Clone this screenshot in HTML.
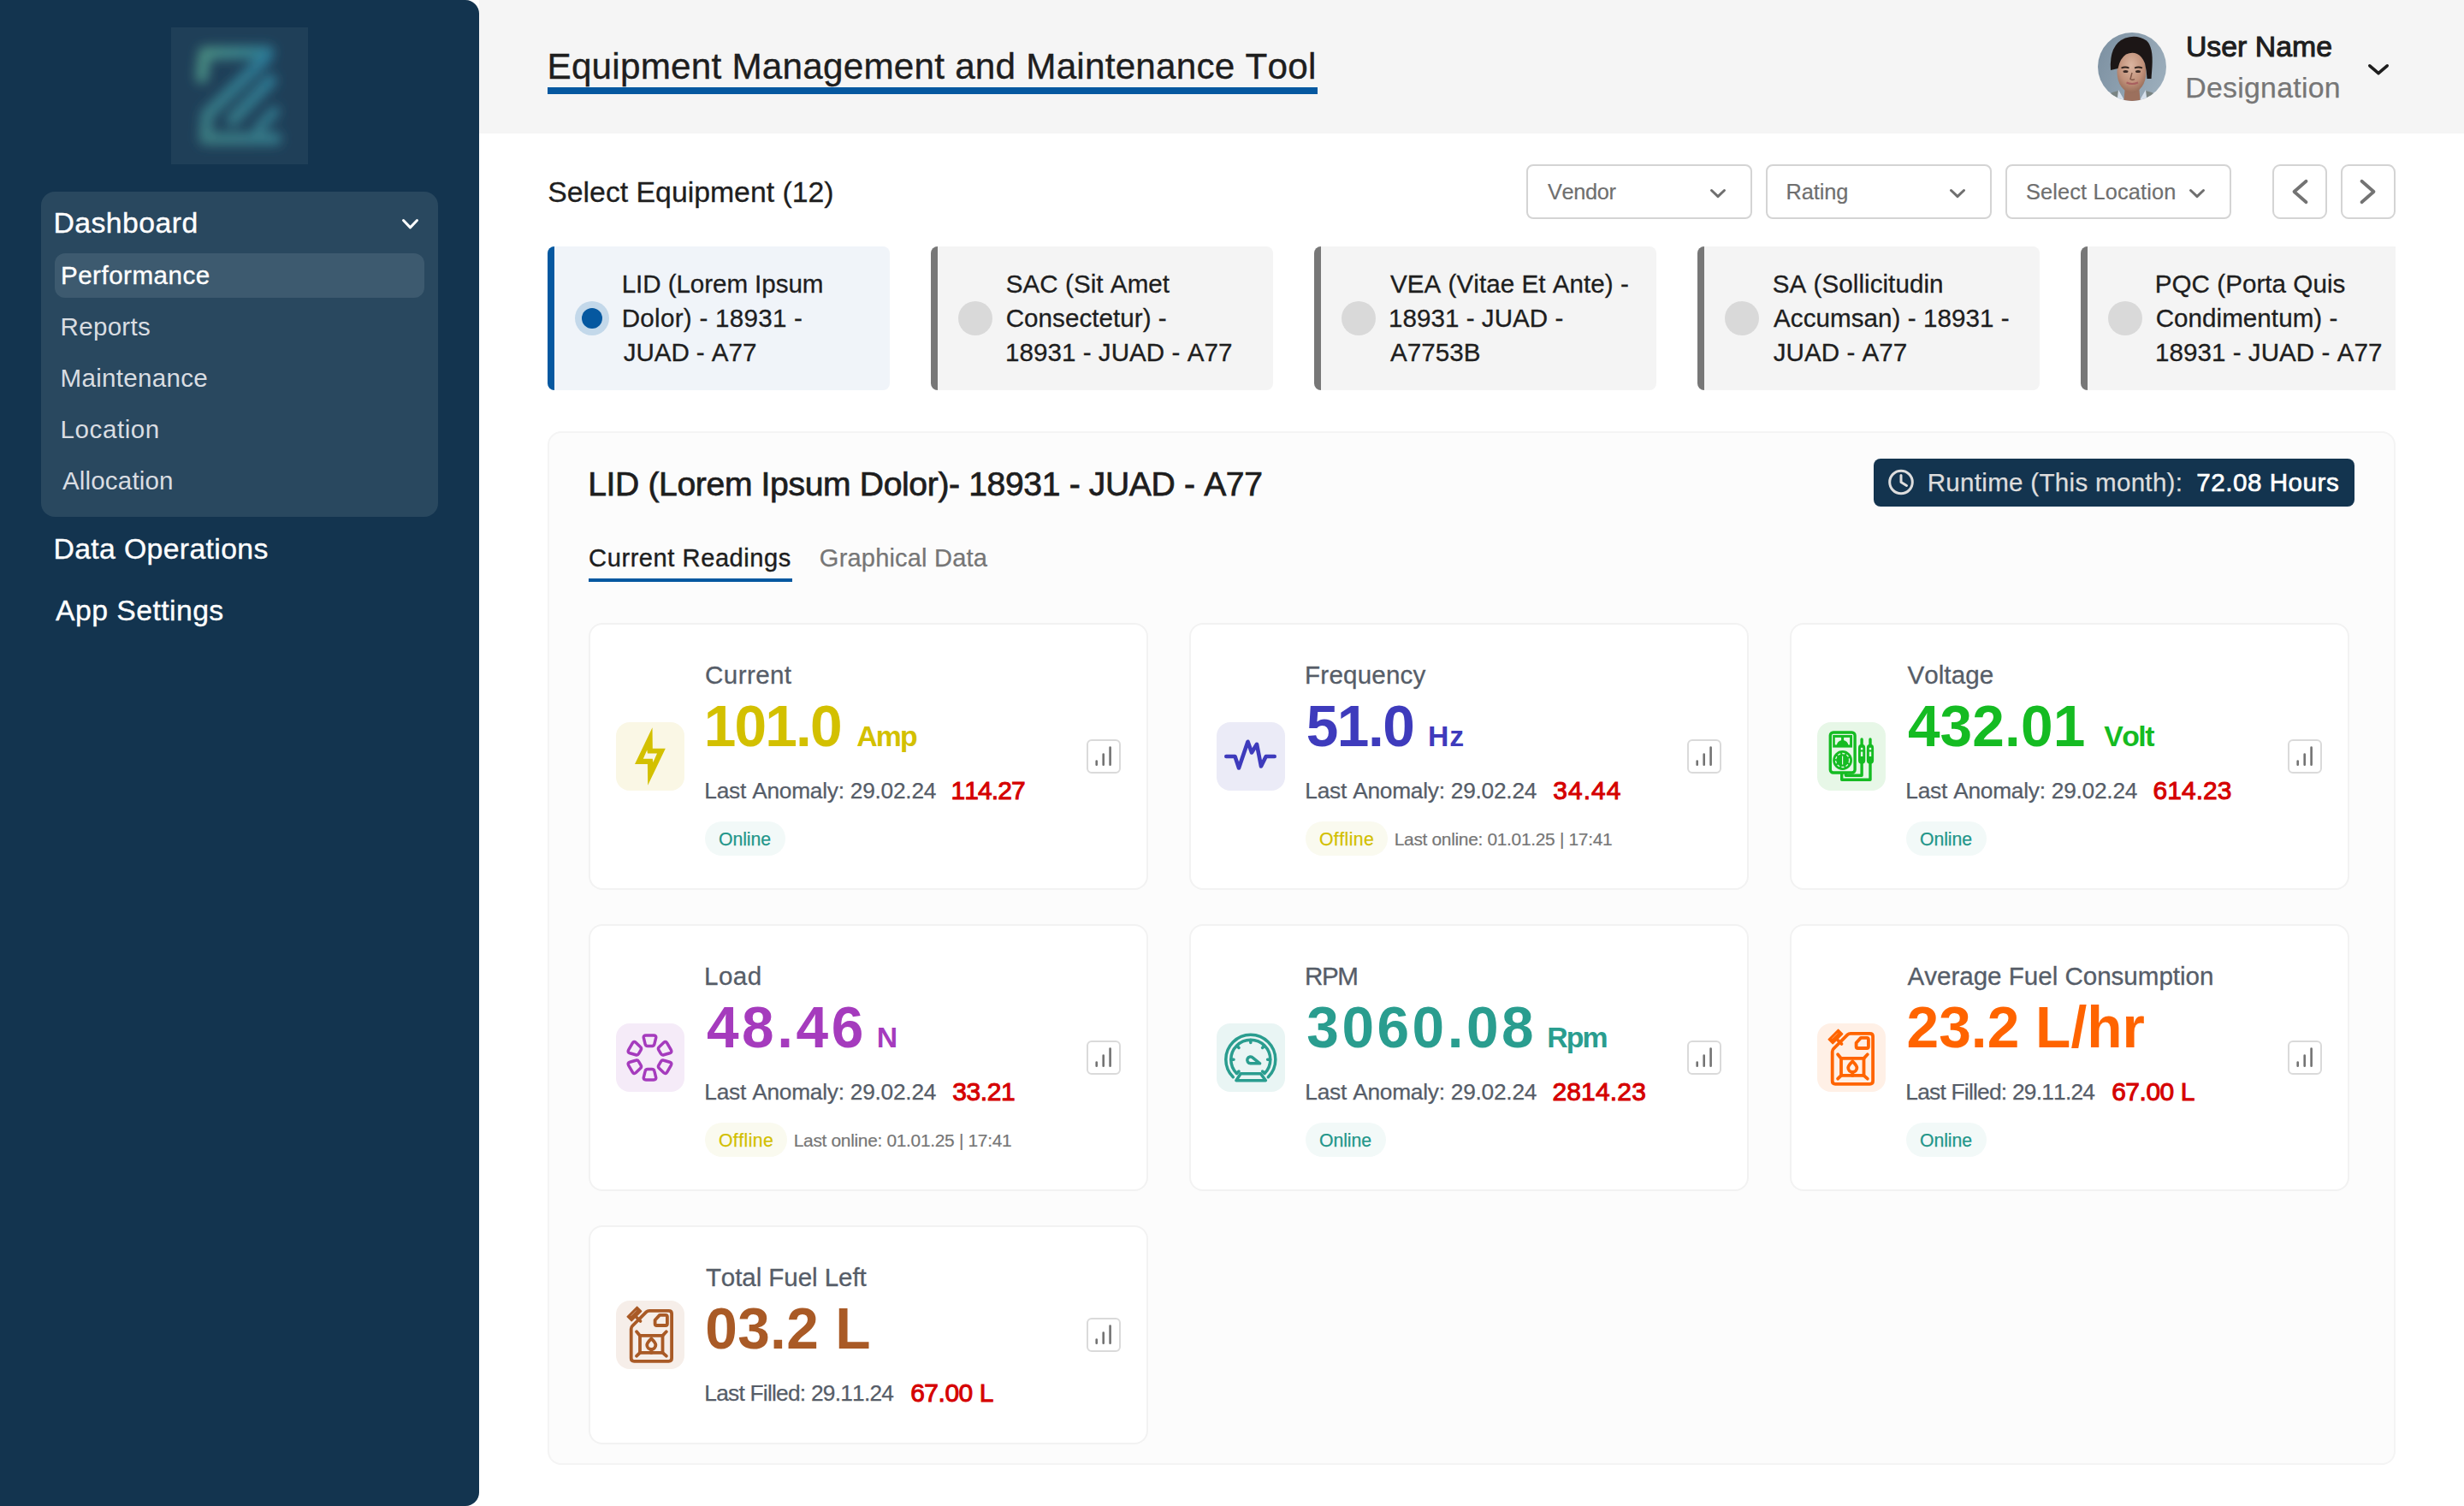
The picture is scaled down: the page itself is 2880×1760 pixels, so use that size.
<!DOCTYPE html>
<html><head><meta charset="utf-8"><title>Equipment Management and Maintenance Tool</title>
<style>
html,body{margin:0;padding:0}
body{width:2880px;height:1760px;position:relative;overflow:hidden;background:#ffffff;font-family:"Liberation Sans",sans-serif}
.a{position:absolute;display:block}
.t{position:absolute;white-space:nowrap;line-height:1;font-kerning:none}
.mk{display:inline-block;width:0;height:0;vertical-align:baseline}
</style></head><body>
<div class="a" style="left:0px;top:0px;width:560px;height:1760px;background:#13344f;border-radius:0 16px 16px 0"></div>
<div class="a" style="left:200px;top:32px;width:160px;height:160px;background:#1f3f58;overflow:hidden"></div>
<svg class="a" style="left:200px;top:32px;width:160px;height:160px" viewBox="0 0 160 160"><defs><filter id="bl" x="-50%" y="-50%" width="200%" height="200%"><feGaussianBlur stdDeviation="6.5"/></filter><linearGradient id="lg" gradientUnits="userSpaceOnUse" x1="35" y1="30" x2="120" y2="60"><stop offset="0" stop-color="#4a8c80"/><stop offset="1" stop-color="#2a7b99"/></linearGradient><linearGradient id="lg2" gradientUnits="userSpaceOnUse" x1="40" y1="130" x2="120" y2="40"><stop offset="0" stop-color="#3b7a80"/><stop offset="1" stop-color="#2b7896"/></linearGradient></defs><g filter="url(#bl)" fill="none" stroke-width="15" stroke-linecap="round" stroke-linejoin="round"><path stroke="url(#lg)" d="M36 58 L39.5 30 L113 29"/><path stroke="url(#lg2)" d="M110 36 L42 102 L40 130 L122 130"/><path stroke="url(#lg2)" d="M116 62 L72 108"/><path stroke="url(#lg2)" d="M121 98 L102 118" stroke-width="12"/></g></svg>
<div class="a" style="left:48px;top:224px;width:464px;height:380px;background:#29485f;border-radius:16px"></div>
<div class="a" style="left:64px;top:296px;width:432px;height:52px;background:#3d5a6f;border-radius:12px"></div>
<svg class="a" style="left:466px;top:252.3px;width:27px;height:19.4px" viewBox="0 0 27 19.4"><path d="M5.5 5.5 L13.5 13.9 L21.5 5.5" fill="none" stroke="#ffffff" stroke-width="3" stroke-linecap="round" stroke-linejoin="round"/></svg>
<div class="a" style="left:560px;top:0px;width:2320px;height:156px;background:#f5f5f5"></div>
<div class="a" style="left:640px;top:102px;width:900px;height:8px;background:#0558a0"></div>
<svg class="a" style="left:2452px;top:38px;width:80px;height:80px" viewBox="0 0 80 80"><defs><clipPath id="avc"><circle cx="40" cy="40" r="40"/></clipPath><linearGradient id="avbg" x1="0" y1="0.2" x2="1" y2="0.6"><stop offset="0" stop-color="#7d91a2"/><stop offset="1" stop-color="#9badbb"/></linearGradient><radialGradient id="avsk" cx="0.48" cy="0.35" r="0.7"><stop offset="0" stop-color="#dbb5a0"/><stop offset="0.6" stop-color="#c09079"/><stop offset="1" stop-color="#8f6552"/></radialGradient></defs><filter id="avbl"><feGaussianBlur stdDeviation="0.7"/></filter><g clip-path="url(#avc)"><rect width="80" height="80" fill="url(#avbg)"/><g filter="url(#avbl)"><path d="M2 84 Q8 71 24 68 L30 84 Z M78 84 Q72 71 56 68 L50 84 Z" fill="#7a8483"/><path d="M24 67 L34 84 L22 84 Z M56 67 L46 84 L58 84 Z" fill="#d6e0ec"/><path d="M32 62 Q40 72 48 62 L50 84 H30 Z" fill="#9c705d"/><ellipse cx="39.5" cy="46" rx="17" ry="24.5" fill="url(#avsk)"/><path d="M15 44 Q13 14 32 6.5 Q46 2 57 9.5 Q65 17 63.5 40 L62.5 54 L57.5 54 Q57 44 55 36 Q52 28 46 25 Q40 22.5 33 25.5 Q26 30 23.5 42 Z" fill="#1f1917"/><path d="M27.5 41.5 Q32 39.5 36.5 41.5 M43 41.5 Q47.5 39.5 52 41.5" stroke="#2e221e" stroke-width="1.8" fill="none"/><ellipse cx="32.5" cy="45.5" rx="3" ry="1.5" fill="#3b2c26"/><ellipse cx="47" cy="45.5" rx="3" ry="1.5" fill="#3b2c26"/><path d="M40 47 L38 54.5 Q40.5 56 43 54.5" stroke="#7e5646" stroke-width="1.4" fill="none"/><path d="M33.5 58.5 Q40 61.5 47 58.5" stroke="#a85f5f" stroke-width="2" fill="none"/></g></g></svg>
<svg class="a" style="left:2764px;top:70.5px;width:32px;height:20.5px" viewBox="0 0 32 20.5"><path d="M5.8 5.8 L16 14.7 L26.2 5.8" fill="none" stroke="#1e1e1e" stroke-width="3.6" stroke-linecap="round" stroke-linejoin="round"/></svg>
<div class="a" style="left:1784px;top:192px;width:264px;height:64px;box-sizing:border-box;border:2px solid #d4d4d4;border-radius:8px;background:#fff"></div>
<svg class="a" style="left:1995px;top:217px;width:26px;height:18.2px" viewBox="0 0 26 18.2"><path d="M5.5 5.5 L13 12.7 L20.5 5.5" fill="none" stroke="#6f6f6f" stroke-width="3" stroke-linecap="round" stroke-linejoin="round"/></svg>
<div class="a" style="left:2064px;top:192px;width:264px;height:64px;box-sizing:border-box;border:2px solid #d4d4d4;border-radius:8px;background:#fff"></div>
<svg class="a" style="left:2275px;top:217px;width:26px;height:18.2px" viewBox="0 0 26 18.2"><path d="M5.5 5.5 L13 12.7 L20.5 5.5" fill="none" stroke="#6f6f6f" stroke-width="3" stroke-linecap="round" stroke-linejoin="round"/></svg>
<div class="a" style="left:2344px;top:192px;width:264px;height:64px;box-sizing:border-box;border:2px solid #d4d4d4;border-radius:8px;background:#fff"></div>
<svg class="a" style="left:2555px;top:217px;width:26px;height:18.2px" viewBox="0 0 26 18.2"><path d="M5.5 5.5 L13 12.7 L20.5 5.5" fill="none" stroke="#6f6f6f" stroke-width="3" stroke-linecap="round" stroke-linejoin="round"/></svg>
<div class="a" style="left:2656px;top:192px;width:64px;height:64px;box-sizing:border-box;border:2px solid #d4d4d4;border-radius:9px;background:#fff"></div>
<div class="a" style="left:2736px;top:192px;width:64px;height:64px;box-sizing:border-box;border:2px solid #d4d4d4;border-radius:9px;background:#fff"></div>
<svg class="a" style="left:2672px;top:200px;width:32px;height:48px" viewBox="0 0 32 48"><path d="M23.5 11.8 L9.5 24 L23.5 36.2" fill="none" stroke="#737373" stroke-width="3.8" stroke-linecap="round" stroke-linejoin="round"/></svg>
<svg class="a" style="left:2752px;top:200px;width:32px;height:48px" viewBox="0 0 32 48"><path d="M8.5 11.8 L22.5 24 L8.5 36.2" fill="none" stroke="#737373" stroke-width="3.8" stroke-linecap="round" stroke-linejoin="round"/></svg>
<div class="a" style="left:640px;top:288px;width:2160px;height:168px;overflow:hidden"><div class="a" style="left:0px;top:0;width:400px;height:168px;background:#f0f4f9;border-radius:8px;overflow:hidden"><div class="a" style="left:0;top:0;width:8px;height:168px;background:#0558a0"></div></div><div class="a" style="left:32px;top:64px;width:40px;height:40px;border-radius:50%;background:#c3d8ea"></div><div class="a" style="left:40px;top:72px;width:24px;height:24px;border-radius:50%;background:#0558a0"></div><div class="a" style="left:448px;top:0;width:400px;height:168px;background:#f4f4f4;border-radius:8px;overflow:hidden"><div class="a" style="left:0;top:0;width:8px;height:168px;background:#777777"></div></div><div class="a" style="left:480px;top:64px;width:40px;height:40px;border-radius:50%;background:#d9d9d9"></div><div class="a" style="left:896px;top:0;width:400px;height:168px;background:#f4f4f4;border-radius:8px;overflow:hidden"><div class="a" style="left:0;top:0;width:8px;height:168px;background:#777777"></div></div><div class="a" style="left:928px;top:64px;width:40px;height:40px;border-radius:50%;background:#d9d9d9"></div><div class="a" style="left:1344px;top:0;width:400px;height:168px;background:#f4f4f4;border-radius:8px;overflow:hidden"><div class="a" style="left:0;top:0;width:8px;height:168px;background:#777777"></div></div><div class="a" style="left:1376px;top:64px;width:40px;height:40px;border-radius:50%;background:#d9d9d9"></div><div class="a" style="left:1792px;top:0;width:400px;height:168px;background:#f4f4f4;border-radius:8px;overflow:hidden"><div class="a" style="left:0;top:0;width:8px;height:168px;background:#777777"></div></div><div class="a" style="left:1824px;top:64px;width:40px;height:40px;border-radius:50%;background:#d9d9d9"></div></div>
<div class="a" style="left:640px;top:504px;width:2160px;height:1208px;box-sizing:border-box;border:2px solid #f4f4f4;border-radius:16px;background:#fcfcfc"></div>
<div class="a" style="left:2190px;top:536px;width:562px;height:56px;background:#13344f;border-radius:8px"></div>
<svg class="a" style="left:2204px;top:546px;width:36px;height:36px" viewBox="0 0 36 36"><circle cx="18" cy="17.5" r="13.3" fill="none" stroke="#dddddd" stroke-width="3"/><path d="M18 9.5 V17.5 L24.5 21.5" fill="none" stroke="#dddddd" stroke-width="3" stroke-linecap="round" stroke-linejoin="round"/></svg>
<div class="a" style="left:688px;top:676px;width:238px;height:4px;background:#0558a0"></div>
<div class="a" style="left:688px;top:728px;width:654px;height:312px;box-sizing:border-box;border:2px solid #f2f2f2;border-radius:16px;background:#fff"></div>
<div class="a" style="left:720px;top:844px;width:80px;height:80px;background:#faf7e5;border-radius:16px"></div>
<svg class="a" style="left:720px;top:844px;width:80px;height:80px" viewBox="0 0 80 80"><path fill="#d3c000" fill-rule="evenodd" d="M42.5 6.2 L42.8 30.8 L57.8 30.8 L37.2 73.7 L36.9 48.9 L22 48.9 Z M36.3 32.5 L36.9 36.6 L48 36.6 L43.3 47.1 L42.8 42.8 L31.8 42.8 Z"/></svg>
<div class="a" style="left:1270px;top:864px;width:40px;height:40px;box-sizing:border-box;border:2px solid #dadada;border-radius:6px;background:#fff"></div>
<svg class="a" style="left:1270px;top:864px;width:40px;height:40px" viewBox="0 0 40 40"><g stroke="#737373" stroke-width="2.6" stroke-linecap="round"><path d="M11.7 25.5 V29.8 M19.7 17.5 V29.8 M27.6 9.5 V29.8"/></g></svg>
<div class="a" style="left:824px;top:960px;width:94px;height:40px;background:#f2f9f8;border-radius:20px"></div>
<div class="a" style="left:1390px;top:728px;width:654px;height:312px;box-sizing:border-box;border:2px solid #f2f2f2;border-radius:16px;background:#fff"></div>
<div class="a" style="left:1422px;top:844px;width:80px;height:80px;background:#ebebf7;border-radius:16px"></div>
<svg class="a" style="left:1422px;top:844px;width:80px;height:80px" viewBox="0 0 80 80"><path fill="none" stroke="#3e3bbc" stroke-width="4.6" stroke-linecap="round" stroke-linejoin="round" d="M11.3 40 H21.5 L26 53.5 L36.5 22.8 L41 35.5 L47 25.8 L52 51.5 L57.7 40 H67.7"/></svg>
<div class="a" style="left:1972px;top:864px;width:40px;height:40px;box-sizing:border-box;border:2px solid #dadada;border-radius:6px;background:#fff"></div>
<svg class="a" style="left:1972px;top:864px;width:40px;height:40px" viewBox="0 0 40 40"><g stroke="#737373" stroke-width="2.6" stroke-linecap="round"><path d="M11.7 25.5 V29.8 M19.7 17.5 V29.8 M27.6 9.5 V29.8"/></g></svg>
<div class="a" style="left:1526px;top:960px;width:96px;height:40px;background:#fafaef;border-radius:20px"></div>
<div class="a" style="left:2092px;top:728px;width:654px;height:312px;box-sizing:border-box;border:2px solid #f2f2f2;border-radius:16px;background:#fff"></div>
<div class="a" style="left:2124px;top:844px;width:80px;height:80px;background:#e7f7e7;border-radius:16px"></div>
<svg class="a" style="left:2124px;top:844px;width:80px;height:80px" viewBox="0 0 80 80"><g fill="none" stroke="#15bb22" stroke-width="3.4" stroke-linecap="round" stroke-linejoin="round"><rect x="15.3" y="12" width="28.8" height="47" rx="3.5"/><path d="M52.1 45 V62.3 H33.4 V60"/><path d="M62 45 V67.3 H28.7 V60"/><path d="M52.1 20 V26 M62 20 V26"/></g><g fill="#15bb22"><rect x="18.2" y="15" width="22.8" height="14.6"/><circle cx="29.6" cy="44.5" r="11.4"/><rect x="48" y="25.8" width="8.2" height="23" rx="4.1"/><rect x="57.9" y="25.8" width="8.2" height="23" rx="4.1"/></g><g fill="#e7f7e7"><rect x="20.8" y="17.9" width="7.3" height="8.5"/><rect x="31.1" y="17.9" width="7" height="8.5"/><rect x="50.9" y="29.8" width="2.4" height="2.6"/><rect x="50.9" y="34.5" width="2.4" height="5.5"/><rect x="60.8" y="29.8" width="2.4" height="2.6"/><rect x="60.8" y="34.5" width="2.4" height="5.5"/></g><path fill="#15bb22" d="M22.6 28 A7 7 0 0 1 36.6 28 Z"/><rect x="28.6" y="17" width="2" height="8" fill="#15bb22"/><circle cx="29.6" cy="44.5" r="8" fill="none" stroke="#e7f7e7" stroke-width="1.3" stroke-dasharray="3.2 2.1"/><rect x="29" y="39.5" width="1.2" height="10" fill="#e7f7e7"/></svg>
<div class="a" style="left:2674px;top:864px;width:40px;height:40px;box-sizing:border-box;border:2px solid #dadada;border-radius:6px;background:#fff"></div>
<svg class="a" style="left:2674px;top:864px;width:40px;height:40px" viewBox="0 0 40 40"><g stroke="#737373" stroke-width="2.6" stroke-linecap="round"><path d="M11.7 25.5 V29.8 M19.7 17.5 V29.8 M27.6 9.5 V29.8"/></g></svg>
<div class="a" style="left:2228px;top:960px;width:94px;height:40px;background:#f2f9f8;border-radius:20px"></div>
<div class="a" style="left:688px;top:1080px;width:654px;height:312px;box-sizing:border-box;border:2px solid #f2f2f2;border-radius:16px;background:#fff"></div>
<div class="a" style="left:720px;top:1196px;width:80px;height:80px;background:#f5ebf8;border-radius:16px"></div>
<svg class="a" style="left:720px;top:1196px;width:80px;height:80px" viewBox="0 0 80 80"><g fill="none" stroke="#a53bbd" stroke-width="3.5" stroke-linejoin="round"><path transform="rotate(0 39.5 40)" d="M35 14 H44 Q47.3 14 46.6 17.2 L44.9 24.2 Q44.4 26.5 42 26.5 H37 Q34.6 26.5 34.1 24.2 L32.4 17.2 Q31.7 14 35 14 Z"/><path transform="rotate(60 39.5 40)" d="M35 14 H44 Q47.3 14 46.6 17.2 L44.9 24.2 Q44.4 26.5 42 26.5 H37 Q34.6 26.5 34.1 24.2 L32.4 17.2 Q31.7 14 35 14 Z"/><path transform="rotate(120 39.5 40)" d="M35 14 H44 Q47.3 14 46.6 17.2 L44.9 24.2 Q44.4 26.5 42 26.5 H37 Q34.6 26.5 34.1 24.2 L32.4 17.2 Q31.7 14 35 14 Z"/><path transform="rotate(180 39.5 40)" d="M35 14 H44 Q47.3 14 46.6 17.2 L44.9 24.2 Q44.4 26.5 42 26.5 H37 Q34.6 26.5 34.1 24.2 L32.4 17.2 Q31.7 14 35 14 Z"/><path transform="rotate(240 39.5 40)" d="M35 14 H44 Q47.3 14 46.6 17.2 L44.9 24.2 Q44.4 26.5 42 26.5 H37 Q34.6 26.5 34.1 24.2 L32.4 17.2 Q31.7 14 35 14 Z"/><path transform="rotate(300 39.5 40)" d="M35 14 H44 Q47.3 14 46.6 17.2 L44.9 24.2 Q44.4 26.5 42 26.5 H37 Q34.6 26.5 34.1 24.2 L32.4 17.2 Q31.7 14 35 14 Z"/></g></svg>
<div class="a" style="left:1270px;top:1216px;width:40px;height:40px;box-sizing:border-box;border:2px solid #dadada;border-radius:6px;background:#fff"></div>
<svg class="a" style="left:1270px;top:1216px;width:40px;height:40px" viewBox="0 0 40 40"><g stroke="#737373" stroke-width="2.6" stroke-linecap="round"><path d="M11.7 25.5 V29.8 M19.7 17.5 V29.8 M27.6 9.5 V29.8"/></g></svg>
<div class="a" style="left:824px;top:1312px;width:96px;height:40px;background:#fafaef;border-radius:20px"></div>
<div class="a" style="left:1390px;top:1080px;width:654px;height:312px;box-sizing:border-box;border:2px solid #f2f2f2;border-radius:16px;background:#fff"></div>
<div class="a" style="left:1422px;top:1196px;width:80px;height:80px;background:#e9f5f4;border-radius:16px"></div>
<svg class="a" style="left:1422px;top:1196px;width:80px;height:80px" viewBox="0 0 80 80"><g fill="none" stroke="#2a9d8f" stroke-width="3.5" stroke-linecap="round" stroke-linejoin="round"><path d="M19.3 62.7 A29 29 0 1 1 60.3 62.7"/><path d="M23.5 58.5 A23 23 0 1 1 56.1 58.5"/><path d="M39.8 19.5 V22.5 M17 42.2 H20 M62.6 42.2 H59.6 M23.9 26.3 L26 28.4 M55.7 26.3 L53.6 28.4 M23.9 58.1 L26 56 M55.7 58.1 L53.6 56"/><path d="M50.6 46.8 L39.7 46.8 A3.9 3.9 0 1 1 42.6 40.3 Z"/><path d="M28.1 58.8 H51.5 L57.4 66.7 H22.9 Z"/></g></svg>
<div class="a" style="left:1972px;top:1216px;width:40px;height:40px;box-sizing:border-box;border:2px solid #dadada;border-radius:6px;background:#fff"></div>
<svg class="a" style="left:1972px;top:1216px;width:40px;height:40px" viewBox="0 0 40 40"><g stroke="#737373" stroke-width="2.6" stroke-linecap="round"><path d="M11.7 25.5 V29.8 M19.7 17.5 V29.8 M27.6 9.5 V29.8"/></g></svg>
<div class="a" style="left:1526px;top:1312px;width:94px;height:40px;background:#f2f9f8;border-radius:20px"></div>
<div class="a" style="left:2092px;top:1080px;width:654px;height:312px;box-sizing:border-box;border:2px solid #f2f2f2;border-radius:16px;background:#fff"></div>
<div class="a" style="left:2124px;top:1196px;width:80px;height:80px;background:#fff0e6;border-radius:16px"></div>
<svg class="a" style="left:2124px;top:1196px;width:80px;height:80px" viewBox="0 0 80 80"><g fill="none" stroke="#ff6400" stroke-width="3.8" stroke-linecap="round" stroke-linejoin="round"><path d="M17.7 33 Q17.7 31 19.2 29.5 L35.5 13.2 Q36.9 11.8 38.9 11.8 H61.6 Q65.1 11.8 65.1 15.3 V67.3 Q65.1 70.8 61.6 70.8 H21.2 Q17.7 70.8 17.7 67.3 Z"/><path d="M45.6 22.8 L51 16.9 H58 Q59.9 16.9 59.9 18.8 V27 Q59.9 29 58 29 H47.6 Q45.6 29 45.6 27 Z"/><rect x="28" y="40.9" width="26.5" height="20"/><path d="M24.1 36.3 L28 40.9 M58.8 36.3 L54.5 40.9 M24.1 64.7 L28 60.9 M58.8 64.7 L54.5 60.9"/><path d="M41.3 44.3 C38.5 47 36.2 49.5 36.2 51.8 A5.1 5.1 0 0 0 46.4 51.8 C46.4 49.5 44.1 47 41.3 44.3 Z"/><path d="M41.3 57 V60.9 M24 19.5 L28.5 24"/></g><path fill="#ff6400" d="M13.2 18.8 L24.6 7.4 L29.6 12.4 L18.2 23.8 Z" stroke="#ff6400" stroke-width="1.5" stroke-linejoin="round"/><path d="M17.5 17.8 L23.8 11.5" stroke="#fff0e6" stroke-width="0.7" opacity="0.6"/></svg>
<div class="a" style="left:2674px;top:1216px;width:40px;height:40px;box-sizing:border-box;border:2px solid #dadada;border-radius:6px;background:#fff"></div>
<svg class="a" style="left:2674px;top:1216px;width:40px;height:40px" viewBox="0 0 40 40"><g stroke="#737373" stroke-width="2.6" stroke-linecap="round"><path d="M11.7 25.5 V29.8 M19.7 17.5 V29.8 M27.6 9.5 V29.8"/></g></svg>
<div class="a" style="left:2228px;top:1312px;width:94px;height:40px;background:#f2f9f8;border-radius:20px"></div>
<div class="a" style="left:688px;top:1432px;width:654px;height:256px;box-sizing:border-box;border:2px solid #f2f2f2;border-radius:16px;background:#fff"></div>
<div class="a" style="left:720px;top:1520px;width:80px;height:80px;background:#f6eee9;border-radius:16px"></div>
<svg class="a" style="left:720px;top:1520px;width:80px;height:80px" viewBox="0 0 80 80"><g fill="none" stroke="#a95a26" stroke-width="3.8" stroke-linecap="round" stroke-linejoin="round"><path d="M17.7 33 Q17.7 31 19.2 29.5 L35.5 13.2 Q36.9 11.8 38.9 11.8 H61.6 Q65.1 11.8 65.1 15.3 V67.3 Q65.1 70.8 61.6 70.8 H21.2 Q17.7 70.8 17.7 67.3 Z"/><path d="M45.6 22.8 L51 16.9 H58 Q59.9 16.9 59.9 18.8 V27 Q59.9 29 58 29 H47.6 Q45.6 29 45.6 27 Z"/><rect x="28" y="40.9" width="26.5" height="20"/><path d="M24.1 36.3 L28 40.9 M58.8 36.3 L54.5 40.9 M24.1 64.7 L28 60.9 M58.8 64.7 L54.5 60.9"/><path d="M41.3 44.3 C38.5 47 36.2 49.5 36.2 51.8 A5.1 5.1 0 0 0 46.4 51.8 C46.4 49.5 44.1 47 41.3 44.3 Z"/><path d="M41.3 57 V60.9 M24 19.5 L28.5 24"/></g><path fill="#a95a26" d="M13.2 18.8 L24.6 7.4 L29.6 12.4 L18.2 23.8 Z" stroke="#a95a26" stroke-width="1.5" stroke-linejoin="round"/><path d="M17.5 17.8 L23.8 11.5" stroke="#f6eee9" stroke-width="0.7" opacity="0.6"/></svg>
<div class="a" style="left:1270px;top:1540px;width:40px;height:40px;box-sizing:border-box;border:2px solid #dadada;border-radius:6px;background:#fff"></div>
<svg class="a" style="left:1270px;top:1540px;width:40px;height:40px" viewBox="0 0 40 40"><g stroke="#737373" stroke-width="2.6" stroke-linecap="round"><path d="M11.7 25.5 V29.8 M19.7 17.5 V29.8 M27.6 9.5 V29.8"/></g></svg>
<span class="t" id="nav_dash" style="left:62.40px;top:244.00px;font-size:33.81px;color:#ffffff;letter-spacing:0.432px;-webkit-text-stroke:0.35px #ffffff">Dashboard</span>
<span class="t" id="nav_perf" style="left:70.95px;top:307.00px;font-size:29.59px;color:#ffffff;letter-spacing:0.486px;-webkit-text-stroke:0.35px #ffffff">Performance</span>
<span class="t" id="nav_rep" style="left:70.57px;top:367.00px;font-size:29.59px;color:#d9dde2;letter-spacing:0.270px">Reports</span>
<span class="t" id="nav_mai" style="left:70.57px;top:427.00px;font-size:29.59px;color:#d9dde2;letter-spacing:0.277px">Maintenance</span>
<span class="t" id="nav_loc" style="left:70.57px;top:487.00px;font-size:29.59px;color:#d9dde2;letter-spacing:0.546px">Location</span>
<span class="t" id="nav_all" style="left:72.94px;top:547.00px;font-size:29.59px;color:#d9dde2;letter-spacing:0.148px">Allocation</span>
<span class="t" id="nav_dat" style="left:62.40px;top:624.50px;font-size:33.81px;color:#ffffff;letter-spacing:0.345px;-webkit-text-stroke:0.35px #ffffff">Data Operations</span>
<span class="t" id="nav_app" style="left:65.11px;top:697.00px;font-size:33.81px;color:#ffffff;letter-spacing:0.407px;-webkit-text-stroke:0.35px #ffffff">App Settings</span>
<span class="t" id="h_title" style="left:639.51px;top:57.00px;font-size:42.27px;color:#1e1e1e;letter-spacing:0.209px;-webkit-text-stroke:0.35px #1e1e1e">Equipment Management and Maintenance Tool</span>
<span class="t" id="h_user" style="left:2554.89px;top:38.00px;font-size:33.81px;color:#1e1e1e;letter-spacing:0.026px;-webkit-text-stroke:1px #1e1e1e">User Name</span>
<span class="t" id="h_desig" style="left:2554.35px;top:86.00px;font-size:33.81px;color:#767676;letter-spacing:0.272px;-webkit-text-stroke:0.25px #767676">Designation</span>
<span class="t" id="sel_eq" style="left:640.31px;top:208.00px;font-size:33.81px;color:#1e1e1e;letter-spacing:-0.008px;-webkit-text-stroke:0.3px #1e1e1e">Select Equipment (12)</span>
<span class="t" id="f_vendor" style="left:1808.99px;top:212.00px;font-size:25.36px;color:#6f6f6f;letter-spacing:-0.350px;-webkit-text-stroke:0.2px #6f6f6f">Vendor</span>
<span class="t" id="f_rating" style="left:2087.52px;top:212.00px;font-size:25.36px;color:#6f6f6f;letter-spacing:-0.080px;-webkit-text-stroke:0.2px #6f6f6f">Rating</span>
<span class="t" id="f_loc" style="left:2367.95px;top:212.00px;font-size:25.36px;color:#6f6f6f;letter-spacing:0.142px;-webkit-text-stroke:0.2px #6f6f6f">Select Location</span>
<span class="t" id="eq0_0" style="left:726.72px;top:317.20px;font-size:29.59px;color:#1e1e1e;letter-spacing:-0.068px;-webkit-text-stroke:0.3px #1e1e1e">LID (Lorem Ipsum</span>
<span class="t" id="eq0_1" style="left:726.72px;top:357.30px;font-size:29.59px;color:#1e1e1e;letter-spacing:0.273px;-webkit-text-stroke:0.3px #1e1e1e">Dolor) - 18931 -</span>
<span class="t" id="eq0_2" style="left:728.69px;top:396.70px;font-size:29.59px;color:#1e1e1e;letter-spacing:-0.056px;-webkit-text-stroke:0.3px #1e1e1e">JUAD - A77</span>
<span class="t" id="eq1_0" style="left:1175.81px;top:317.20px;font-size:29.59px;color:#1e1e1e;letter-spacing:0.050px;-webkit-text-stroke:0.3px #1e1e1e">SAC (Sit Amet</span>
<span class="t" id="eq1_1" style="left:1175.65px;top:357.30px;font-size:29.59px;color:#1e1e1e;letter-spacing:0.050px;-webkit-text-stroke:0.3px #1e1e1e">Consectetur) -</span>
<span class="t" id="eq1_2" style="left:1174.90px;top:396.70px;font-size:29.59px;color:#1e1e1e;letter-spacing:0.050px;-webkit-text-stroke:0.3px #1e1e1e">18931 - JUAD - A77</span>
<span class="t" id="eq2_0" style="left:1625.02px;top:317.20px;font-size:29.59px;color:#1e1e1e;letter-spacing:0.050px;-webkit-text-stroke:0.3px #1e1e1e">VEA (Vitae Et Ante) -</span>
<span class="t" id="eq2_1" style="left:1622.90px;top:357.30px;font-size:29.59px;color:#1e1e1e;letter-spacing:0.050px;-webkit-text-stroke:0.3px #1e1e1e">18931 - JUAD -</span>
<span class="t" id="eq2_2" style="left:1625.09px;top:396.70px;font-size:29.59px;color:#1e1e1e;letter-spacing:0.050px;-webkit-text-stroke:0.3px #1e1e1e">A7753B</span>
<span class="t" id="eq3_0" style="left:2071.81px;top:317.20px;font-size:29.59px;color:#1e1e1e;letter-spacing:0.050px;-webkit-text-stroke:0.3px #1e1e1e">SA (Sollicitudin</span>
<span class="t" id="eq3_1" style="left:2073.09px;top:357.30px;font-size:29.59px;color:#1e1e1e;letter-spacing:0.050px;-webkit-text-stroke:0.3px #1e1e1e">Accumsan) - 18931 -</span>
<span class="t" id="eq3_2" style="left:2072.69px;top:396.70px;font-size:29.59px;color:#1e1e1e;letter-spacing:0.050px;-webkit-text-stroke:0.3px #1e1e1e">JUAD - A77</span>
<span class="t" id="eq4_0" style="left:2518.72px;top:317.20px;font-size:29.59px;color:#1e1e1e;letter-spacing:0.050px;-webkit-text-stroke:0.3px #1e1e1e">PQC (Porta Quis</span>
<span class="t" id="eq4_1" style="left:2519.65px;top:357.30px;font-size:29.59px;color:#1e1e1e;letter-spacing:0.050px;-webkit-text-stroke:0.3px #1e1e1e">Condimentum) -</span>
<span class="t" id="eq4_2" style="left:2518.90px;top:396.70px;font-size:29.59px;color:#1e1e1e;letter-spacing:0.050px;-webkit-text-stroke:0.3px #1e1e1e">18931 - JUAD - A77</span>
<span class="t" id="p_title" style="left:687.17px;top:545.60px;font-size:39.10px;color:#1e1e1e;letter-spacing:-0.351px;-webkit-text-stroke:0.75px #1e1e1e">LID (Lorem Ipsum Dolor)- 18931 - JUAD - A77</span>
<span class="t" id="tab_cur" style="left:688.12px;top:637.80px;font-size:29.06px;color:#1e1e1e;letter-spacing:0.571px;-webkit-text-stroke:0.4px #1e1e1e">Current Readings</span>
<span class="t" id="tab_gra" style="left:957.86px;top:637.80px;font-size:29.06px;color:#767676;letter-spacing:0.174px;-webkit-text-stroke:0.25px #767676">Graphical Data</span>
<span class="t" id="rt_lab" style="left:2252.70px;top:549.40px;font-size:29.59px;color:#dddddd;letter-spacing:0.285px;-webkit-text-stroke:0.25px #dddddd">Runtime (This month):</span>
<span class="t" id="rt_val" style="left:2567.31px;top:549.40px;font-size:29.59px;color:#ffffff;letter-spacing:0.530px;-webkit-text-stroke:0.65px #ffffff">72.08 Hours</span>
<span class="t" id="c0_lab" style="left:824.05px;top:773.70px;font-size:29.59px;color:#565d68;letter-spacing:0.396px;-webkit-text-stroke:0.3px #565d68">Current</span>
<span class="t" id="c0_val" style="left:822.64px;top:814.90px;font-size:67.63px;color:#d3c000;letter-spacing:-1.817px;font-weight:700">101.0</span>
<span class="t" id="c0_unit" style="left:1001.16px;top:843.90px;font-size:33.81px;color:#d3c000;letter-spacing:-1.790px;font-weight:700">Amp</span>
<span class="t" id="c0_alab" style="left:823.37px;top:910.50px;font-size:26.31px;color:#565d68;letter-spacing:-0.249px;-webkit-text-stroke:0.25px #565d68">Last Anomaly: 29.02.24</span>
<span class="t" id="c0_aval" style="left:1111.42px;top:908.80px;font-size:29.94px;color:#d50000;letter-spacing:-0.858px;-webkit-text-stroke:1px #d50000">114.27</span>
<span class="t" id="c0_st" style="left:839.92px;top:969.90px;font-size:21.22px;color:#22968a;letter-spacing:-0.029px;-webkit-text-stroke:0.25px #22968a">Online</span>
<span class="t" id="c1_lab" style="left:1525.12px;top:773.70px;font-size:29.59px;color:#565d68;letter-spacing:0.192px;-webkit-text-stroke:0.3px #565d68">Frequency</span>
<span class="t" id="c1_val" style="left:1526.82px;top:814.90px;font-size:67.63px;color:#3e3bbc;letter-spacing:-1.547px;font-weight:700">51.0</span>
<span class="t" id="c1_unit" style="left:1669.04px;top:843.90px;font-size:33.81px;color:#3e3bbc;letter-spacing:0.871px;font-weight:700">Hz</span>
<span class="t" id="c1_alab" style="left:1525.37px;top:910.50px;font-size:26.31px;color:#565d68;letter-spacing:-0.249px;-webkit-text-stroke:0.25px #565d68">Last Anomaly: 29.02.24</span>
<span class="t" id="c1_aval" style="left:1815.36px;top:908.80px;font-size:29.94px;color:#d50000;letter-spacing:1.024px;-webkit-text-stroke:1px #d50000">34.44</span>
<span class="t" id="c1_st" style="left:1541.92px;top:969.90px;font-size:21.22px;color:#d2bf00;letter-spacing:0.445px;-webkit-text-stroke:0.25px #d2bf00">Offline</span>
<span class="t" id="c1_lo" style="left:1629.78px;top:970.90px;font-size:20.93px;color:#767676;letter-spacing:-0.316px;-webkit-text-stroke:0.2px #767676">Last online: 01.01.25 | 17:41</span>
<span class="t" id="c2_lab" style="left:2229.42px;top:773.70px;font-size:29.59px;color:#565d68;letter-spacing:0.069px;-webkit-text-stroke:0.3px #565d68">Voltage</span>
<span class="t" id="c2_val" style="left:2229.88px;top:814.90px;font-size:67.63px;color:#15bb22;letter-spacing:0.122px;font-weight:700">432.01</span>
<span class="t" id="c2_unit" style="left:2459.27px;top:843.90px;font-size:33.81px;color:#15bb22;letter-spacing:-1.567px;font-weight:700">Volt</span>
<span class="t" id="c2_alab" style="left:2227.37px;top:910.50px;font-size:26.31px;color:#565d68;letter-spacing:-0.249px;-webkit-text-stroke:0.25px #565d68">Last Anomaly: 29.02.24</span>
<span class="t" id="c2_aval" style="left:2516.38px;top:908.80px;font-size:29.94px;color:#d50000;letter-spacing:0.112px;-webkit-text-stroke:1px #d50000">614.23</span>
<span class="t" id="c2_st" style="left:2243.92px;top:969.90px;font-size:21.22px;color:#22968a;letter-spacing:-0.029px;-webkit-text-stroke:0.25px #22968a">Online</span>
<span class="t" id="c3_lab" style="left:823.12px;top:1125.70px;font-size:29.59px;color:#565d68;letter-spacing:0.407px;-webkit-text-stroke:0.3px #565d68">Load</span>
<span class="t" id="c3_val" style="left:825.88px;top:1166.90px;font-size:67.63px;color:#a53bbd;letter-spacing:3.541px;font-weight:700">48.46</span>
<span class="t" id="c3_unit" style="left:1024.64px;top:1195.90px;font-size:33.81px;color:#a53bbd;letter-spacing:0.000px;font-weight:700">N</span>
<span class="t" id="c3_alab" style="left:823.37px;top:1262.50px;font-size:26.31px;color:#565d68;letter-spacing:-0.249px;-webkit-text-stroke:0.25px #565d68">Last Anomaly: 29.02.24</span>
<span class="t" id="c3_aval" style="left:1113.36px;top:1260.80px;font-size:29.94px;color:#d50000;letter-spacing:-0.405px;-webkit-text-stroke:1px #d50000">33.21</span>
<span class="t" id="c3_st" style="left:839.92px;top:1321.90px;font-size:21.22px;color:#d2bf00;letter-spacing:0.445px;-webkit-text-stroke:0.25px #d2bf00">Offline</span>
<span class="t" id="c3_lo" style="left:927.78px;top:1322.90px;font-size:20.93px;color:#767676;letter-spacing:-0.316px;-webkit-text-stroke:0.2px #767676">Last online: 01.01.25 | 17:41</span>
<span class="t" id="c4_lab" style="left:1525.12px;top:1125.70px;font-size:29.59px;color:#565d68;letter-spacing:-1.490px;-webkit-text-stroke:0.3px #565d68">RPM</span>
<span class="t" id="c4_val" style="left:1527.35px;top:1166.90px;font-size:67.63px;color:#2a9d8f;letter-spacing:3.471px;font-weight:700">3060.08</span>
<span class="t" id="c4_unit" style="left:1808.34px;top:1195.90px;font-size:33.81px;color:#2a9d8f;letter-spacing:-1.925px;font-weight:700">Rpm</span>
<span class="t" id="c4_alab" style="left:1525.37px;top:1262.50px;font-size:26.31px;color:#565d68;letter-spacing:-0.249px;-webkit-text-stroke:0.25px #565d68">Last Anomaly: 29.02.24</span>
<span class="t" id="c4_aval" style="left:1814.39px;top:1260.80px;font-size:29.94px;color:#d50000;letter-spacing:0.200px;-webkit-text-stroke:1px #d50000">2814.23</span>
<span class="t" id="c4_st" style="left:1541.92px;top:1321.90px;font-size:21.22px;color:#22968a;letter-spacing:-0.029px;-webkit-text-stroke:0.25px #22968a">Online</span>
<span class="t" id="c5_lab" style="left:2229.49px;top:1125.70px;font-size:29.59px;color:#565d68;letter-spacing:-0.019px;-webkit-text-stroke:0.3px #565d68">Average Fuel Consumption</span>
<span class="t" id="c5_val" style="left:2228.56px;top:1166.90px;font-size:67.63px;color:#ff6400;letter-spacing:0.036px;font-weight:700">23.2 L/hr</span>
<span class="t" id="c5_alab" style="left:2227.37px;top:1262.50px;font-size:26.31px;color:#565d68;letter-spacing:-0.762px;-webkit-text-stroke:0.25px #565d68">Last Filled: 29.11.24</span>
<span class="t" id="c5_aval" style="left:2468.18px;top:1260.80px;font-size:29.94px;color:#d50000;letter-spacing:-0.463px;-webkit-text-stroke:1px #d50000">67.00 L</span>
<span class="t" id="c5_st" style="left:2243.92px;top:1321.90px;font-size:21.22px;color:#22968a;letter-spacing:-0.029px;-webkit-text-stroke:0.25px #22968a">Online</span>
<span class="t" id="c6_lab" style="left:824.89px;top:1477.70px;font-size:29.59px;color:#565d68;letter-spacing:-0.085px;-webkit-text-stroke:0.3px #565d68">Total Fuel Left</span>
<span class="t" id="c6_val" style="left:824.23px;top:1518.90px;font-size:67.63px;color:#a95a26;letter-spacing:0.317px;font-weight:700">03.2 L</span>
<span class="t" id="c6_alab" style="left:823.37px;top:1614.50px;font-size:26.31px;color:#565d68;letter-spacing:-0.762px;-webkit-text-stroke:0.25px #565d68">Last Filled: 29.11.24</span>
<span class="t" id="c6_aval" style="left:1064.18px;top:1612.80px;font-size:29.94px;color:#d50000;letter-spacing:-0.463px;-webkit-text-stroke:1px #d50000">67.00 L</span>
<script>(function(){var z=window.innerWidth/2880;if(z&&Math.abs(z-1)>0.01){document.documentElement.style.zoom=z;}})();</script>
</body></html>
